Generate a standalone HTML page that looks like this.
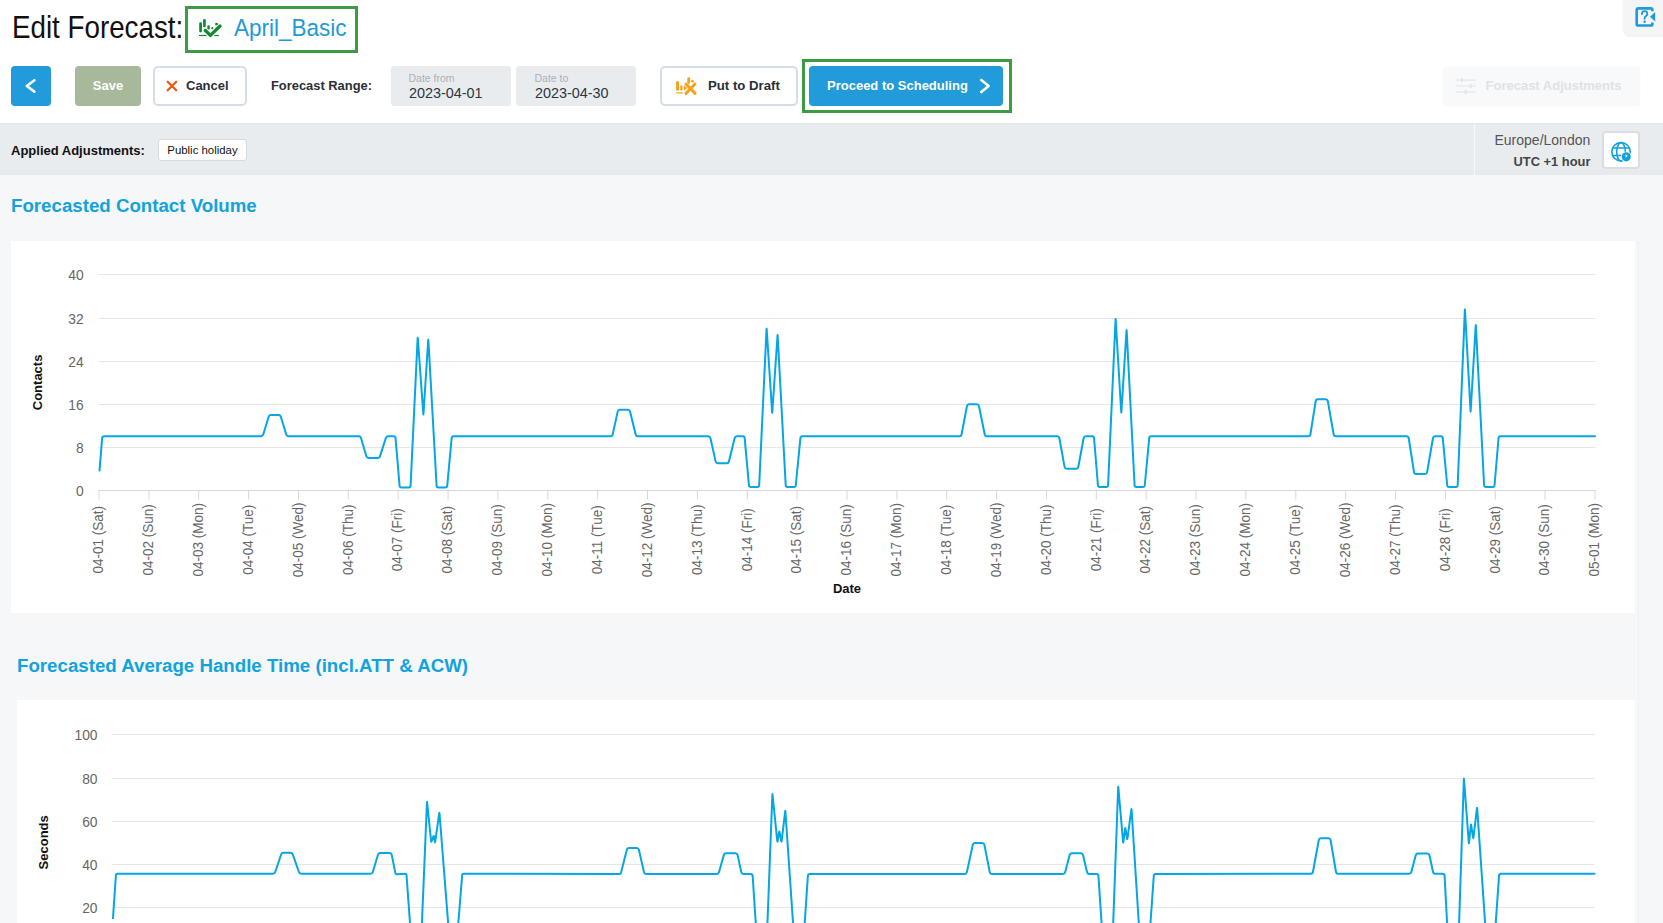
<!DOCTYPE html>
<html><head><meta charset="utf-8">
<style>
*{box-sizing:border-box;margin:0;padding:0}
html,body{width:1663px;height:923px;overflow:hidden;background:#f6f7f9;font-family:"Liberation Sans", sans-serif;}
.abs{position:absolute}
#hdr{position:absolute;left:0;top:0;width:1663px;height:123px;background:#fff}
#band{position:absolute;left:0;top:123px;width:1663px;height:52px;background:#e9ecef}
.t{position:absolute;white-space:nowrap;line-height:1}
.btn{position:absolute;border-radius:4px}
.card{position:absolute;background:#fff}
svg text{font-family:"Liberation Sans", sans-serif}
.xl{font-size:14.6px;fill:#666}
.yl{font-size:13.8px;fill:#666}
.at{font-size:13px;font-weight:bold;fill:#111}
</style></head><body>
<div id="hdr"></div>
<div id="band"></div>
<div class="abs" style="left:0;top:123px;width:1663px;height:1.5px;background:#e4e7eb"></div>
<div class="abs" style="left:0;top:170px;width:1663px;height:5px;background:#e6e9ed"></div>
<div class="abs" style="left:1474px;top:123px;width:1px;height:52px;background:#f7f8fa"></div>

<!-- title -->
<div class="t" style="left:12.3px;top:11.9px;font-size:30.5px;color:#111;transform:scaleX(0.91);transform-origin:0 0">Edit Forecast:</div>
<div class="abs" style="left:185px;top:6px;width:173px;height:47px;border:3px solid #3c9b43"></div>
<svg class="abs" style="left:194px;top:14px" width="32" height="28" viewBox="0 0 32 28">
 <g fill="#148a2f">
  <rect x="5.2" y="8.2" width="2.8" height="10.3" rx="1.4"/>
  <rect x="9.1" y="4.9" width="2.7" height="8.4" rx="1.3"/>
  <rect x="13.3" y="11.2" width="2.5" height="4.3" rx="1.2"/>
  <rect x="17.3" y="13" width="2.1" height="2.2" rx="1"/>
  <rect x="21.2" y="8.8" width="2.8" height="2.7" rx="1.3"/>
  <rect x="5" y="20.9" width="7.7" height="1.2"/>
  <rect x="20.3" y="20.9" width="4.6" height="1.2"/>
 </g>
 <polyline points="11.2,16.3 16.4,21.4 26,12" fill="none" stroke="#fff" stroke-width="5" stroke-linejoin="round" stroke-linecap="round"/>
 <polyline points="11.2,16.3 16.4,21.4 26,12" fill="none" stroke="#148a2f" stroke-width="3.3" stroke-linejoin="round" stroke-linecap="round"/>
</svg>
<div class="t" style="left:233.5px;top:16.1px;font-size:24.3px;color:#1e9ad8;transform:scaleX(0.925);transform-origin:0 0">April_Basic</div>

<!-- help -->
<div class="abs" style="left:1624px;top:-6px;width:45px;height:41px;background:#f4f5f7;border-radius:5px;box-shadow:0 1px 3px rgba(0,0,0,0.10)"></div>
<svg class="abs" style="left:1620px;top:0px" width="43" height="40" viewBox="0 0 43 40">
 <path d="M32.4,11.3 L32.4,10 Q32.4,8.4 30.8,8.4 L18.3,8.4 Q16.7,8.4 16.7,10 L16.7,23.9 Q16.7,25.5 18.3,25.5 L30.8,25.5 Q32.4,25.5 32.4,23.9 L32.4,22.4" fill="none" stroke="#1e9ad8" stroke-width="2.6"/>
 <path d="M21.9,14 Q21.9,11.1 24.6,11.1 Q27.3,11.1 27.3,13.7 Q27.3,15.3 25.7,16.3 Q24.6,17 24.6,18.8" fill="none" stroke="#1e9ad8" stroke-width="1.9" stroke-linecap="round"/>
 <circle cx="24.6" cy="21.7" r="1.25" fill="#1e9ad8"/>
 <path d="M30,16.8 L35.2,12 L35.2,21.6 Z" fill="#1e9ad8"/>
</svg>

<!-- toolbar -->
<div class="btn" style="left:11px;top:66px;width:40px;height:40px;background:#219bd9"></div>
<svg class="abs" style="left:18px;top:72px" width="26" height="28" viewBox="0 0 26 28">
 <polyline points="16.4,8.3 8.8,14 16.4,19.6" fill="none" stroke="#fff" stroke-width="2.6" stroke-linecap="round" stroke-linejoin="round"/>
</svg>
<div class="btn" style="left:75px;top:66px;width:66px;height:40px;background:#a8b99b"></div>
<div class="t" style="left:75px;top:79px;width:66px;text-align:center;font-size:13px;font-weight:bold;color:#fff">Save</div>
<div class="btn" style="left:153px;top:66px;width:94px;height:40px;background:#fff;border:2px solid #d5dee6;border-radius:5px"></div>
<svg class="abs" style="left:160px;top:74px" width="24" height="24" viewBox="0 0 24 24">
 <path d="M7.7,7.7 L16.2,16.2 M16.2,7.7 L7.7,16.2" stroke="#ea5b17" stroke-width="2.3" stroke-linecap="round"/>
</svg>
<div class="t" style="left:186px;top:79px;font-size:13px;font-weight:bold;color:#2a2f38">Cancel</div>
<div class="t" style="left:271px;top:80.3px;font-size:12.9px;font-weight:bold;color:#2a2f38">Forecast Range:</div>

<div class="btn" style="left:391px;top:66px;width:120px;height:40px;background:#e9ecef;border-radius:3px"></div>
<div class="t" style="left:408.5px;top:73px;font-size:10.5px;color:#a9b0b9">Date from</div>
<div class="t" style="left:409px;top:86px;font-size:14.4px;color:#2c3540">2023-04-01</div>
<div class="btn" style="left:516px;top:66px;width:120px;height:40px;background:#e9ecef;border-radius:3px"></div>
<div class="t" style="left:534.5px;top:73px;font-size:10.5px;color:#a9b0b9">Date to</div>
<div class="t" style="left:535px;top:86px;font-size:14.4px;color:#2c3540">2023-04-30</div>

<div class="btn" style="left:660px;top:66px;width:138px;height:40px;background:#fff;border:2px solid #d5dee6;border-radius:5px"></div>
<svg class="abs" style="left:670px;top:70px" width="32" height="32" viewBox="0 0 32 32">
 <g fill="#f5a31c">
  <rect x="6.1" y="11.1" width="2.9" height="9.7" rx="1.4"/>
  <rect x="10.2" y="15.3" width="2.3" height="5.5" rx="1.1"/>
  <rect x="17.3" y="7.3" width="2.8" height="6.6" rx="1.4"/>
  <rect x="21.1" y="10" width="2.8" height="2.5" rx="1.2"/>
  <path d="M13.9,15.3 L17.3,18 L13.9,20.5 Z"/>
  <rect x="6.1" y="22.2" width="6.9" height="1.4" rx="0.7"/>
 </g>
 <path d="M16,14 L25,23.4 M25,14 L16,23.4" stroke="#f5a31c" stroke-width="3" stroke-linecap="round"/>
</svg>
<div class="t" style="left:708px;top:79px;font-size:13.2px;font-weight:bold;color:#2a2f38">Put to Draft</div>

<div class="abs" style="left:802px;top:59px;width:210px;height:54px;border:3px solid #3c9b43"></div>
<div class="btn" style="left:809px;top:66px;width:194px;height:40px;background:#219bd9"></div>
<div class="t" style="left:827px;top:79px;font-size:13px;font-weight:bold;color:#fff">Proceed to Scheduling</div>
<svg class="abs" style="left:960px;top:70px" width="40" height="32" viewBox="0 0 40 32">
 <polyline points="21.3,10 28.6,15.9 21.3,22" fill="none" stroke="#fff" stroke-width="2.6" stroke-linecap="round" stroke-linejoin="round"/>
</svg>

<div class="btn" style="left:1443px;top:67px;width:197px;height:39px;background:#f8f9fa;box-shadow:0 0 2px rgba(0,0,0,0.03)"></div>
<svg class="abs" style="left:1450px;top:72px" width="30" height="28" viewBox="0 0 30 28">
 <g stroke="#e3e6e9" stroke-width="1.2">
  <path d="M6,8.2 L26,8.2 M6,14 L26,14 M6,19.9 L26,19.9"/>
 </g>
 <g fill="#e3e6e9">
  <rect x="11" y="6.2" width="2" height="4"/>
  <rect x="19.8" y="12" width="2" height="4"/>
  <rect x="14.6" y="17.9" width="2" height="4"/>
 </g>
</svg>
<div class="t" style="left:1485.5px;top:79px;font-size:13px;font-weight:bold;color:#dfe2e5">Forecast Adjustments</div>

<!-- band -->
<div class="t" style="left:11px;top:144px;font-size:13px;font-weight:bold;color:#111">Applied Adjustments:</div>
<div class="btn" style="left:158px;top:139px;width:89px;height:22px;background:#fff;border:1px solid #d3dbe2;border-radius:3px"></div>
<div class="t" style="left:167.3px;top:145px;font-size:11.4px;color:#111">Public holiday</div>
<div class="t" style="left:1494.5px;top:133px;font-size:14px;color:#555">Europe/London</div>
<div class="t" style="left:1513.5px;top:155.5px;font-size:12.9px;font-weight:bold;color:#444">UTC +1 hour</div>
<div class="btn" style="left:1602px;top:131px;width:38px;height:38px;background:#fff;border:2px solid #d8dee4;border-radius:4px"></div>
<svg class="abs" style="left:1600px;top:128px" width="44" height="44" viewBox="0 0 44 44">
 <g fill="none" stroke="#12a0dc" stroke-width="1.6">
  <circle cx="21" cy="23.8" r="9.2"/>
  <ellipse cx="21" cy="23.8" rx="4.3" ry="9.2"/>
  <path d="M12.3,20 L29.7,20 M12.3,27.5 L29.7,27.5"/>
 </g>
 <circle cx="26.2" cy="28.8" r="5.4" fill="#fff"/>
 <circle cx="26.2" cy="28.8" r="4.6" fill="#12a0dc"/>
 <path d="M25.6,26.3 L27.8,28 L25.6,29.6 Z" fill="#fff"/>
</svg>

<!-- charts -->
<div class="t" style="left:11px;top:197.3px;font-size:18.7px;font-weight:bold;color:#12a3dc">Forecasted Contact Volume</div>
<div class="card" style="left:11px;top:241px;width:1624px;height:372px"></div>
<div class="abs" style="left:1638px;top:241px;width:1px;height:682px;background:#eff1f4"></div>
<div class="t" style="left:17px;top:657.3px;font-size:18.7px;font-weight:bold;color:#12a3dc">Forecasted Average Handle Time (incl.ATT &amp; ACW)</div>
<div class="card" style="left:17px;top:700px;width:1618px;height:240px"></div>
<svg class="abs" style="left:0;top:0" width="1663" height="923" viewBox="0 0 1663 923">
<line x1="98.5" y1="274.5" x2="1595.5" y2="274.5" stroke="#e6e6e6" stroke-width="1"/>
<line x1="98.5" y1="318.5" x2="1595.5" y2="318.5" stroke="#e6e6e6" stroke-width="1"/>
<line x1="98.5" y1="361.5" x2="1595.5" y2="361.5" stroke="#e6e6e6" stroke-width="1"/>
<line x1="98.5" y1="404.5" x2="1595.5" y2="404.5" stroke="#e6e6e6" stroke-width="1"/>
<line x1="98.5" y1="447.5" x2="1595.5" y2="447.5" stroke="#e6e6e6" stroke-width="1"/>
<line x1="98.5" y1="490.5" x2="1595.5" y2="490.5" stroke="#d8d8d8" stroke-width="1"/>
<line x1="99.0" y1="490" x2="99.0" y2="499.5" stroke="#d8d8d8" stroke-width="1"/>
<text x="0" y="0" transform="translate(103.2,539.8) rotate(-90) scale(0.925,1)" text-anchor="middle" class="xl">04-01 (Sat)</text>
<line x1="148.9" y1="490" x2="148.9" y2="499.5" stroke="#d8d8d8" stroke-width="1"/>
<text x="0" y="0" transform="translate(153.1,539.8) rotate(-90) scale(0.925,1)" text-anchor="middle" class="xl">04-02 (Sun)</text>
<line x1="198.7" y1="490" x2="198.7" y2="499.5" stroke="#d8d8d8" stroke-width="1"/>
<text x="0" y="0" transform="translate(202.9,539.8) rotate(-90) scale(0.925,1)" text-anchor="middle" class="xl">04-03 (Mon)</text>
<line x1="248.6" y1="490" x2="248.6" y2="499.5" stroke="#d8d8d8" stroke-width="1"/>
<text x="0" y="0" transform="translate(252.8,539.8) rotate(-90) scale(0.925,1)" text-anchor="middle" class="xl">04-04 (Tue)</text>
<line x1="298.5" y1="490" x2="298.5" y2="499.5" stroke="#d8d8d8" stroke-width="1"/>
<text x="0" y="0" transform="translate(302.7,539.8) rotate(-90) scale(0.925,1)" text-anchor="middle" class="xl">04-05 (Wed)</text>
<line x1="348.3" y1="490" x2="348.3" y2="499.5" stroke="#d8d8d8" stroke-width="1"/>
<text x="0" y="0" transform="translate(352.5,539.8) rotate(-90) scale(0.925,1)" text-anchor="middle" class="xl">04-06 (Thu)</text>
<line x1="398.2" y1="490" x2="398.2" y2="499.5" stroke="#d8d8d8" stroke-width="1"/>
<text x="0" y="0" transform="translate(402.4,539.8) rotate(-90) scale(0.925,1)" text-anchor="middle" class="xl">04-07 (Fri)</text>
<line x1="448.1" y1="490" x2="448.1" y2="499.5" stroke="#d8d8d8" stroke-width="1"/>
<text x="0" y="0" transform="translate(452.3,539.8) rotate(-90) scale(0.925,1)" text-anchor="middle" class="xl">04-08 (Sat)</text>
<line x1="497.9" y1="490" x2="497.9" y2="499.5" stroke="#d8d8d8" stroke-width="1"/>
<text x="0" y="0" transform="translate(502.1,539.8) rotate(-90) scale(0.925,1)" text-anchor="middle" class="xl">04-09 (Sun)</text>
<line x1="547.8" y1="490" x2="547.8" y2="499.5" stroke="#d8d8d8" stroke-width="1"/>
<text x="0" y="0" transform="translate(552.0,539.8) rotate(-90) scale(0.925,1)" text-anchor="middle" class="xl">04-10 (Mon)</text>
<line x1="597.7" y1="490" x2="597.7" y2="499.5" stroke="#d8d8d8" stroke-width="1"/>
<text x="0" y="0" transform="translate(601.9,539.8) rotate(-90) scale(0.925,1)" text-anchor="middle" class="xl">04-11 (Tue)</text>
<line x1="647.5" y1="490" x2="647.5" y2="499.5" stroke="#d8d8d8" stroke-width="1"/>
<text x="0" y="0" transform="translate(651.7,539.8) rotate(-90) scale(0.925,1)" text-anchor="middle" class="xl">04-12 (Wed)</text>
<line x1="697.4" y1="490" x2="697.4" y2="499.5" stroke="#d8d8d8" stroke-width="1"/>
<text x="0" y="0" transform="translate(701.6,539.8) rotate(-90) scale(0.925,1)" text-anchor="middle" class="xl">04-13 (Thu)</text>
<line x1="747.3" y1="490" x2="747.3" y2="499.5" stroke="#d8d8d8" stroke-width="1"/>
<text x="0" y="0" transform="translate(751.5,539.8) rotate(-90) scale(0.925,1)" text-anchor="middle" class="xl">04-14 (Fri)</text>
<line x1="797.1" y1="490" x2="797.1" y2="499.5" stroke="#d8d8d8" stroke-width="1"/>
<text x="0" y="0" transform="translate(801.3,539.8) rotate(-90) scale(0.925,1)" text-anchor="middle" class="xl">04-15 (Sat)</text>
<line x1="847.0" y1="490" x2="847.0" y2="499.5" stroke="#d8d8d8" stroke-width="1"/>
<text x="0" y="0" transform="translate(851.2,539.8) rotate(-90) scale(0.925,1)" text-anchor="middle" class="xl">04-16 (Sun)</text>
<line x1="896.9" y1="490" x2="896.9" y2="499.5" stroke="#d8d8d8" stroke-width="1"/>
<text x="0" y="0" transform="translate(901.1,539.8) rotate(-90) scale(0.925,1)" text-anchor="middle" class="xl">04-17 (Mon)</text>
<line x1="946.7" y1="490" x2="946.7" y2="499.5" stroke="#d8d8d8" stroke-width="1"/>
<text x="0" y="0" transform="translate(950.9,539.8) rotate(-90) scale(0.925,1)" text-anchor="middle" class="xl">04-18 (Tue)</text>
<line x1="996.6" y1="490" x2="996.6" y2="499.5" stroke="#d8d8d8" stroke-width="1"/>
<text x="0" y="0" transform="translate(1000.8,539.8) rotate(-90) scale(0.925,1)" text-anchor="middle" class="xl">04-19 (Wed)</text>
<line x1="1046.5" y1="490" x2="1046.5" y2="499.5" stroke="#d8d8d8" stroke-width="1"/>
<text x="0" y="0" transform="translate(1050.7,539.8) rotate(-90) scale(0.925,1)" text-anchor="middle" class="xl">04-20 (Thu)</text>
<line x1="1096.3" y1="490" x2="1096.3" y2="499.5" stroke="#d8d8d8" stroke-width="1"/>
<text x="0" y="0" transform="translate(1100.5,539.8) rotate(-90) scale(0.925,1)" text-anchor="middle" class="xl">04-21 (Fri)</text>
<line x1="1146.2" y1="490" x2="1146.2" y2="499.5" stroke="#d8d8d8" stroke-width="1"/>
<text x="0" y="0" transform="translate(1150.4,539.8) rotate(-90) scale(0.925,1)" text-anchor="middle" class="xl">04-22 (Sat)</text>
<line x1="1196.1" y1="490" x2="1196.1" y2="499.5" stroke="#d8d8d8" stroke-width="1"/>
<text x="0" y="0" transform="translate(1200.3,539.8) rotate(-90) scale(0.925,1)" text-anchor="middle" class="xl">04-23 (Sun)</text>
<line x1="1245.9" y1="490" x2="1245.9" y2="499.5" stroke="#d8d8d8" stroke-width="1"/>
<text x="0" y="0" transform="translate(1250.1,539.8) rotate(-90) scale(0.925,1)" text-anchor="middle" class="xl">04-24 (Mon)</text>
<line x1="1295.8" y1="490" x2="1295.8" y2="499.5" stroke="#d8d8d8" stroke-width="1"/>
<text x="0" y="0" transform="translate(1300.0,539.8) rotate(-90) scale(0.925,1)" text-anchor="middle" class="xl">04-25 (Tue)</text>
<line x1="1345.7" y1="490" x2="1345.7" y2="499.5" stroke="#d8d8d8" stroke-width="1"/>
<text x="0" y="0" transform="translate(1349.9,539.8) rotate(-90) scale(0.925,1)" text-anchor="middle" class="xl">04-26 (Wed)</text>
<line x1="1395.5" y1="490" x2="1395.5" y2="499.5" stroke="#d8d8d8" stroke-width="1"/>
<text x="0" y="0" transform="translate(1399.7,539.8) rotate(-90) scale(0.925,1)" text-anchor="middle" class="xl">04-27 (Thu)</text>
<line x1="1445.4" y1="490" x2="1445.4" y2="499.5" stroke="#d8d8d8" stroke-width="1"/>
<text x="0" y="0" transform="translate(1449.6,539.8) rotate(-90) scale(0.925,1)" text-anchor="middle" class="xl">04-28 (Fri)</text>
<line x1="1495.3" y1="490" x2="1495.3" y2="499.5" stroke="#d8d8d8" stroke-width="1"/>
<text x="0" y="0" transform="translate(1499.5,539.8) rotate(-90) scale(0.925,1)" text-anchor="middle" class="xl">04-29 (Sat)</text>
<line x1="1545.1" y1="490" x2="1545.1" y2="499.5" stroke="#d8d8d8" stroke-width="1"/>
<text x="0" y="0" transform="translate(1549.3,539.8) rotate(-90) scale(0.925,1)" text-anchor="middle" class="xl">04-30 (Sun)</text>
<line x1="1595.0" y1="490" x2="1595.0" y2="499.5" stroke="#d8d8d8" stroke-width="1"/>
<text x="0" y="0" transform="translate(1599.2,539.8) rotate(-90) scale(0.925,1)" text-anchor="middle" class="xl">05-01 (Mon)</text>
<text x="83.6" y="279.8" text-anchor="end" class="yl">40</text>
<text x="83.6" y="323.8" text-anchor="end" class="yl">32</text>
<text x="83.6" y="366.8" text-anchor="end" class="yl">24</text>
<text x="83.6" y="409.8" text-anchor="end" class="yl">16</text>
<text x="83.6" y="452.8" text-anchor="end" class="yl">8</text>
<text x="83.6" y="495.8" text-anchor="end" class="yl">0</text>
<text x="0" y="0" transform="translate(42.3,382.4) rotate(-90)" text-anchor="middle" class="at">Contacts</text>
<text x="847" y="592.8" text-anchor="middle" class="at">Date</text>
<path d="M99.50,470.55 L102.15,438.04 Q102.30,436.25 104.10,436.25 L260.90,436.25 Q262.70,436.25 263.23,434.53 L268.67,416.67 Q269.20,414.95 271.00,414.95 L278.50,414.95 Q280.30,414.95 280.83,416.67 L286.27,434.53 Q286.80,436.25 288.60,436.25 L358.70,436.25 Q360.50,436.25 361.01,437.98 L366.39,456.32 Q366.90,458.05 368.70,458.05 L377.60,458.05 Q379.40,458.05 379.95,456.34 L385.85,437.96 Q386.40,436.25 388.20,436.25 L393.60,436.25 Q395.40,436.25 395.55,438.04 L399.55,485.66 Q399.70,487.45 401.50,487.45 L408.70,487.45 Q410.50,487.45 410.59,485.65 L417.64,338.15 Q417.70,336.95 417.79,338.15 L423.31,413.85 Q423.40,415.05 423.48,413.85 L428.22,340.05 Q428.30,338.85 428.37,340.05 L436.60,485.65 Q436.70,487.45 438.50,487.45 L445.30,487.45 Q447.10,487.45 447.26,485.66 L451.64,438.04 Q451.80,436.25 453.60,436.25 L610.50,436.25 Q612.30,436.25 612.68,434.49 L617.72,411.41 Q618.10,409.65 619.90,409.65 L627.80,409.65 Q629.60,409.65 630.03,411.40 L635.67,434.50 Q636.10,436.25 637.90,436.25 L708.20,436.25 Q710.00,436.25 710.39,438.01 L715.61,461.39 Q716.00,463.15 717.80,463.15 L726.70,463.15 Q728.50,463.15 728.93,461.40 L734.67,438.00 Q735.10,436.25 736.90,436.25 L742.70,436.25 Q744.50,436.25 744.66,438.04 L748.94,485.26 Q749.10,487.05 750.90,487.05 L757.30,487.05 Q759.10,487.05 759.18,485.25 L766.54,329.05 Q766.60,327.85 766.68,329.05 L772.12,412.25 Q772.20,413.45 772.28,412.25 L777.52,335.45 Q777.60,334.25 777.66,335.45 L785.70,485.25 Q785.80,487.05 787.60,487.05 L793.80,487.05 Q795.60,487.05 795.78,485.26 L800.42,438.04 Q800.60,436.25 802.40,436.25 L959.40,436.25 Q961.20,436.25 961.54,434.48 L966.96,406.02 Q967.30,404.25 969.10,404.25 L976.80,404.25 Q978.60,404.25 978.96,406.01 L984.74,434.49 Q985.10,436.25 986.90,436.25 L1057.20,436.25 Q1059.00,436.25 1059.32,438.02 L1064.58,466.88 Q1064.90,468.65 1066.70,468.65 L1076.20,468.65 Q1078.00,468.65 1078.33,466.88 L1083.67,438.02 Q1084.00,436.25 1085.80,436.25 L1092.10,436.25 Q1093.90,436.25 1094.05,438.04 L1097.95,485.26 Q1098.10,487.05 1099.90,487.05 L1106.20,487.05 Q1108.00,487.05 1108.08,485.25 L1115.55,319.45 Q1115.60,318.25 1115.67,319.45 L1121.23,412.05 Q1121.30,413.25 1121.38,412.05 L1126.52,330.65 Q1126.60,329.45 1126.66,330.65 L1134.61,485.25 Q1134.70,487.05 1136.50,487.05 L1142.80,487.05 Q1144.60,487.05 1144.77,485.26 L1149.23,438.04 Q1149.40,436.25 1151.20,436.25 L1308.30,436.25 Q1310.10,436.25 1310.38,434.47 L1315.72,401.03 Q1316.00,399.25 1317.80,399.25 L1325.70,399.25 Q1327.50,399.25 1327.81,401.02 L1333.69,434.48 Q1334.00,436.25 1335.80,436.25 L1406.60,436.25 Q1408.40,436.25 1408.68,438.03 L1414.02,472.17 Q1414.30,473.95 1416.10,473.95 L1425.00,473.95 Q1426.80,473.95 1427.11,472.18 L1432.99,438.02 Q1433.30,436.25 1435.10,436.25 L1440.80,436.25 Q1442.60,436.25 1442.77,438.04 L1447.23,485.26 Q1447.40,487.05 1449.20,487.05 L1455.80,487.05 Q1457.60,487.05 1457.67,485.25 L1464.85,309.85 Q1464.90,308.65 1464.97,309.85 L1470.53,411.05 Q1470.60,412.25 1470.67,411.05 L1475.73,325.65 Q1475.80,324.45 1475.86,325.65 L1484.11,485.25 Q1484.20,487.05 1486.00,487.05 L1492.60,487.05 Q1494.40,487.05 1494.55,485.26 L1498.55,438.04 Q1498.70,436.25 1500.50,436.25 L1595.00,436.25" fill="none" stroke="#05a6e3" stroke-width="2" stroke-linejoin="round" stroke-linecap="round"/>
<line x1="112.5" y1="734.5" x2="1594.5" y2="734.5" stroke="#e6e6e6" stroke-width="1"/>
<line x1="112.5" y1="778.5" x2="1594.5" y2="778.5" stroke="#e6e6e6" stroke-width="1"/>
<line x1="112.5" y1="821.5" x2="1594.5" y2="821.5" stroke="#e6e6e6" stroke-width="1"/>
<line x1="112.5" y1="864.5" x2="1594.5" y2="864.5" stroke="#e6e6e6" stroke-width="1"/>
<line x1="112.5" y1="907.5" x2="1594.5" y2="907.5" stroke="#e6e6e6" stroke-width="1"/>
<text x="97.5" y="739.8" text-anchor="end" class="yl">100</text>
<text x="97.5" y="783.8" text-anchor="end" class="yl">80</text>
<text x="97.5" y="826.8" text-anchor="end" class="yl">60</text>
<text x="97.5" y="869.8" text-anchor="end" class="yl">40</text>
<text x="97.5" y="912.8" text-anchor="end" class="yl">20</text>
<text x="0" y="0" transform="translate(47.8,842.3) rotate(-90)" text-anchor="middle" class="at">Seconds</text>
<path d="M113.00,918.10 L115.88,875.50 Q116.00,873.70 117.80,873.70 L272.90,873.70 Q274.70,873.70 275.27,871.99 L281.13,854.51 Q281.70,852.80 283.50,852.80 L290.40,852.80 Q292.20,852.80 292.79,854.50 L298.91,872.00 Q299.50,873.70 301.30,873.70 L370.50,873.70 Q372.30,873.70 372.82,871.98 L377.98,854.82 Q378.50,853.10 380.30,853.10 L389.60,853.10 Q391.40,853.10 391.75,854.87 L395.37,873.12 Q395.60,874.30 396.80,874.23 L405.20,873.77 Q406.40,873.70 406.49,874.90 L411.87,948.50 Q412.00,950.30 413.80,950.30 L419.00,950.30 Q420.80,950.30 420.87,948.50 L426.95,802.40 Q427.00,801.20 427.12,802.39 L431.08,841.11 Q431.20,842.30 431.62,841.18 L433.38,836.42 Q433.80,835.30 433.98,836.49 L434.82,841.81 Q435.00,843.00 435.17,841.81 L439.23,813.29 Q439.40,812.10 439.49,813.30 L450.16,948.51 Q450.30,950.30 452.10,950.30 L454.30,950.30 Q456.10,950.30 456.25,948.51 L462.20,874.90 Q462.30,873.70 463.50,873.70 L619.50,873.90 Q620.70,873.90 621.00,872.74 L626.86,849.64 Q627.30,847.90 629.10,847.90 L636.70,847.90 Q638.50,847.90 638.90,849.66 L644.00,872.14 Q644.40,873.90 646.20,873.90 L716.70,873.90 Q718.50,873.90 718.99,872.17 L723.81,854.93 Q724.30,853.20 726.10,853.20 L735.40,853.20 Q737.20,853.20 737.58,854.96 L741.32,872.14 Q741.70,873.90 743.50,873.90 L750.70,873.90 Q752.50,873.90 752.62,875.70 L757.48,948.50 Q757.60,950.30 759.40,950.30 L764.60,950.30 Q766.40,950.30 766.47,948.50 L772.35,794.70 Q772.40,793.50 772.52,794.69 L777.28,841.21 Q777.40,842.40 777.59,841.22 L779.11,831.98 Q779.30,830.80 779.53,831.98 L781.27,841.12 Q781.50,842.30 781.64,841.11 L785.16,811.29 Q785.30,810.10 785.38,811.30 L794.78,948.50 Q794.90,950.30 796.70,950.30 L801.10,950.30 Q802.90,950.30 803.02,948.50 L807.88,875.70 Q808.00,873.90 809.80,873.90 L964.70,873.90 Q966.50,873.90 966.88,872.14 L972.82,844.66 Q973.20,842.90 975.00,842.90 L982.20,842.90 Q984.00,842.90 984.35,844.67 L989.75,872.13 Q990.10,873.90 991.90,873.90 L1062.90,873.90 Q1064.70,873.90 1065.15,872.16 L1069.65,854.94 Q1070.10,853.20 1071.90,853.20 L1080.80,853.20 Q1082.60,853.20 1083.01,854.95 L1087.09,872.15 Q1087.50,873.90 1089.30,873.90 L1096.50,873.90 Q1098.30,873.90 1098.42,875.70 L1103.28,948.50 Q1103.40,950.30 1105.20,950.30 L1110.40,950.30 Q1112.20,950.30 1112.27,948.50 L1118.16,787.20 Q1118.20,786.00 1118.30,787.20 L1123.10,842.10 Q1123.20,843.30 1123.36,842.11 L1125.14,828.69 Q1125.30,827.50 1125.49,828.68 L1127.11,838.72 Q1127.30,839.90 1127.46,838.71 L1131.34,809.59 Q1131.50,808.40 1131.58,809.60 L1140.39,948.50 Q1140.50,950.30 1142.30,950.30 L1146.80,950.30 Q1148.60,950.30 1148.72,948.50 L1153.78,875.70 Q1153.90,873.90 1155.70,873.90 L1310.80,873.80 Q1312.60,873.80 1312.92,872.03 L1318.78,840.07 Q1319.10,838.30 1320.90,838.30 L1328.50,838.30 Q1330.30,838.30 1330.60,840.07 L1336.00,872.03 Q1336.30,873.80 1338.10,873.80 L1409.10,873.80 Q1410.90,873.80 1411.35,872.06 L1415.75,855.24 Q1416.20,853.50 1418.00,853.50 L1427.30,853.50 Q1429.10,853.50 1429.47,855.26 L1433.03,872.04 Q1433.40,873.80 1435.20,873.80 L1442.70,873.80 Q1444.50,873.80 1444.59,875.60 L1448.41,948.50 Q1448.50,950.30 1450.30,950.30 L1456.40,950.30 Q1458.20,950.30 1458.26,948.50 L1463.86,779.20 Q1463.90,778.00 1463.99,779.20 L1468.81,843.00 Q1468.90,844.20 1469.02,843.01 L1470.88,825.09 Q1471.00,823.90 1471.18,825.09 L1473.12,837.71 Q1473.30,838.90 1473.44,837.71 L1476.96,808.29 Q1477.10,807.10 1477.18,808.30 L1486.88,948.50 Q1487.00,950.30 1488.80,950.30 L1492.00,950.30 Q1493.80,950.30 1493.93,948.50 L1499.07,875.60 Q1499.20,873.80 1501.00,873.80 L1594.50,873.80" fill="none" stroke="#05a6e3" stroke-width="2" stroke-linejoin="round" stroke-linecap="round"/>
</svg>
</body></html>
